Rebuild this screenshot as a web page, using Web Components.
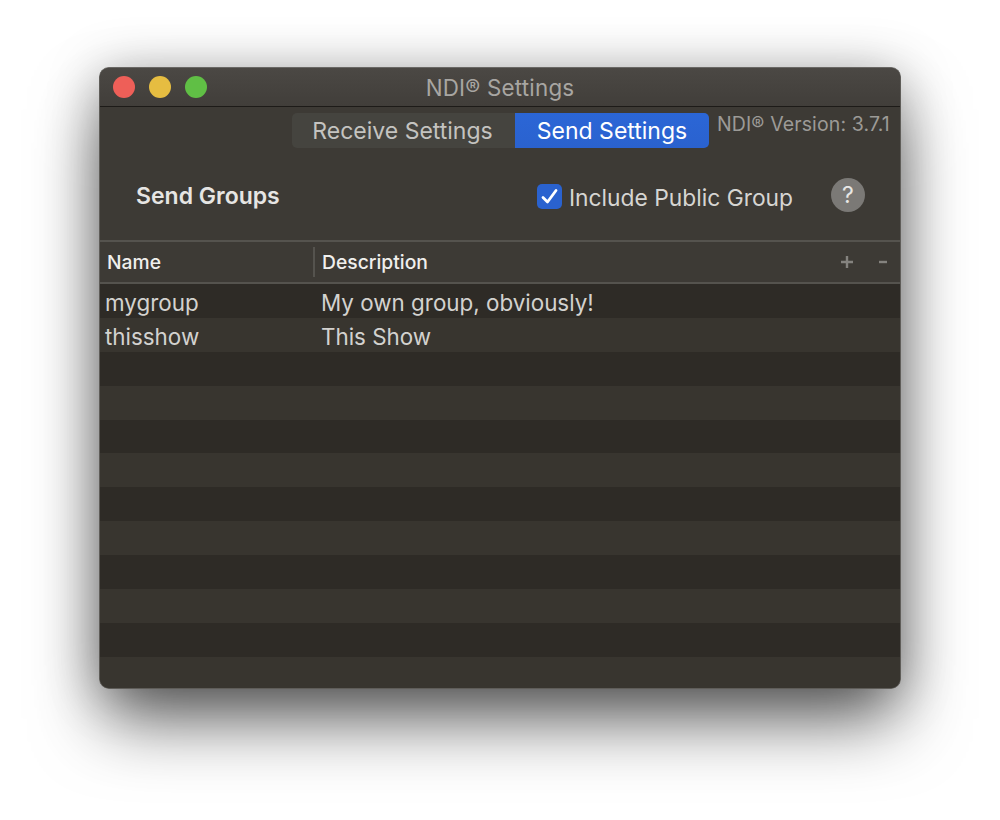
<!DOCTYPE html>
<html>
<head>
<meta charset="utf-8">
<title>NDI Settings</title>
<style>
  html, body { margin: 0; background: #fff; }
  body { width: 1000px; height: 820px; overflow: hidden; padding: 67px 0 0 99px; box-sizing: border-box; font-family: Inter, "Liberation Sans", sans-serif; }
</style>
</head>
<body>
<ndi-window>
  <span slot="title">NDI® Settings</span>
  <tab-bar></tab-bar>
  <groups-bar></groups-bar>
  <groups-table></groups-table>
</ndi-window>

<script>
//window frame with title bar
var template_window = document.createElement("template");
template_window.innerHTML = `
<style>
  :host { display: block; width: 802px; height: 622px; }
  .frame {
    height: 100%; box-sizing: border-box; display: flex; flex-direction: column;
    background: #3d3a35; border: 1px solid #5f5d59; border-top-color: #6a6865; border-radius: 10px; overflow: hidden;
  }
  .shadow {
    height: 100%; border-radius: 10px;
    box-shadow: 0 36px 70px -6px rgba(0,0,0,.62), 0 4px 52px 0 rgba(0,0,0,.26);
  }
  .title {
    height: 38px; flex: none; display: flex; align-items: center; position: relative;
    background: linear-gradient(#4b4844, #413e3a); border-bottom: 1px solid #1d1b18;
    padding-left: 13px; gap: 14px;
  }
  .dot { width: 22px; height: 22px; border-radius: 50%; }
  .name { position: absolute; left: 0; right: 0; top: 6px; text-align: center; font-size: 22.4px; color: #a8a6a2; letter-spacing: .2px; }
</style>
<div class="shadow">
  <div class="frame">
    <div class="title">
      <div class="dot" style="background:#ee5f58"></div>
      <div class="dot" style="background:#e6bd41"></div>
      <div class="dot" style="background:#60bf45"></div>
      <div class="name"><slot name="title"></slot></div>
    </div>
    <slot></slot>
  </div>
</div>`;
class NdiWindow extends HTMLElement {
  constructor(){
    super();
    this.attachShadow({mode:"open"}).appendChild(template_window.content.cloneNode(true));
  }
}
customElements.define("ndi-window", NdiWindow);

//segmented control and version label
var template_tabs = document.createElement("template");
template_tabs.innerHTML = `
<style>
  :host { display: flex; height: 56px; padding: 6px 0 0 192px; box-sizing: border-box; flex: none; }
  .seg { display: flex; flex: none; height: 35px; font-size: 23px; border-radius: 5px; overflow: hidden; }
  .seg div { display: flex; align-items: center; justify-content: center; flex: none; }
  .off { width: 223px; padding-right: 2px; box-sizing: border-box; background: #45443f; color: #c4c3c0; }
  .on { width: 194px; background: linear-gradient(#2b66d6, #2a62cf); color: #fff; }
  .ver { margin-left: 8px; font-size: 19.5px; color: #9c9a97; line-height: 22px; white-space: nowrap; letter-spacing: .12px; }
</style>
<div class="seg"><div class="off">Receive Settings</div><div class="on">Send Settings</div></div>
<div class="ver">NDI® Version: 3.7.1</div>`;
class TabBar extends HTMLElement {
  constructor(){
    super();
    this.attachShadow({mode:"open"}).appendChild(template_tabs.content.cloneNode(true));
  }
}
customElements.define("tab-bar", TabBar);

//send groups line, checkbox and help button
var template_groups = document.createElement("template");
template_groups.innerHTML = `
<style>
  :host { display: flex; align-items: center; height: 79px; flex: none; box-sizing: border-box; padding: 0 35px 12px 36px; border-bottom: 2px solid #55534e; }
  .label { font-size: 23px; font-weight: 600; color: #e6e5e3; margin-top: 1px; }
  .check { margin-left: auto; margin-top: 1px; width: 25px; height: 25px; border-radius: 5px; background: #2a62cf; display: flex; align-items: center; justify-content: center; }
  .text { margin-left: 7px; margin-top: 4px; font-size: 22.8px; color: #d6d5d2; }
  .help { margin-left: 38px; margin-bottom: 1px; width: 34px; height: 34px; border-radius: 50%; background: #7b7976; color: #e8e7e5; font-size: 23px; display: flex; align-items: center; justify-content: center; }
</style>
<div class="label">Send Groups</div>
<div class="check">
  <svg width="19" height="19" viewBox="0 0 19 19"><path d="M3 10.5 L7.5 15 L16 3.5" fill="none" stroke="#fff" stroke-width="2.8" stroke-linecap="round" stroke-linejoin="round"/></svg>
</div>
<div class="text">Include Public Group</div>
<div class="help">?</div>`;
class GroupsBar extends HTMLElement {
  constructor(){
    super();
    this.attachShadow({mode:"open"}).appendChild(template_groups.content.cloneNode(true));
  }
}
customElements.define("groups-bar", GroupsBar);

//table with header and striped rows
var template_table = document.createElement("template");
template_table.innerHTML = `
<style>
  :host { display: flex; flex-direction: column; flex: 1; min-height: 0; overflow: hidden; }
  .head { height: 42px; flex: none; box-sizing: border-box; display: flex; align-items: center; border-bottom: 2px solid #55534e; font-size: 19.3px; font-weight: 500; color: #f0efed; }
  .c1 { width: 213px; box-sizing: border-box; padding-left: 7px; flex: none; }
  .c2 { flex: 1; box-sizing: border-box; padding-left: 7px; height: 30px; line-height: 30px; border-left: 2px solid #55534e; }
  .head svg { flex: none; display: block; }
  .plus { margin-right: 24px; }
  .minus { margin-right: 12px; }
  .row { height: 33.9px; flex: none; display: flex; align-items: center; box-sizing: border-box; padding-top: 4px; font-size: 22.4px; color: #d3d2cf; }
  .row .c1 { padding-left: 5px; }
  .row .c2 { border-left: 0; padding-left: 8px; }
</style>
<div class="head">
  <div class="c1">Name</div>
  <div class="c2">Description</div>
  <svg class="plus" width="14" height="14" viewBox="0 0 14 14"><path d="M1 7H13M7 1V13" stroke="#85837f" stroke-width="2.4"/></svg>
  <svg class="minus" width="10" height="14" viewBox="0 0 10 14"><path d="M1 7H9" stroke="#85837f" stroke-width="2.4"/></svg>
</div>
<div id="rows"></div>`;
var group_rows = [["mygroup", "My own group, obviously!"], ["thisshow", "This Show"]];
class GroupsTable extends HTMLElement {
  constructor(){
    super();
    this.attachShadow({mode:"open"}).appendChild(template_table.content.cloneNode(true));
  }
  connectedCallback(){
    var holder = this.shadowRoot.getElementById("rows");
    for (var i = 0; i < 12; i++) {
      var row = document.createElement("div");
      row.className = "row";
      row.style.background = i % 2 ? "#38352f" : "#2e2b26";
      var g = group_rows[i] || ["", ""];
      row.innerHTML = '<div class="c1"></div><div class="c2"></div>';
      row.children[0].textContent = g[0];
      row.children[1].textContent = g[1];
      holder.appendChild(row);
    }
  }
}
customElements.define("groups-table", GroupsTable);
</script>
</body>
</html>
